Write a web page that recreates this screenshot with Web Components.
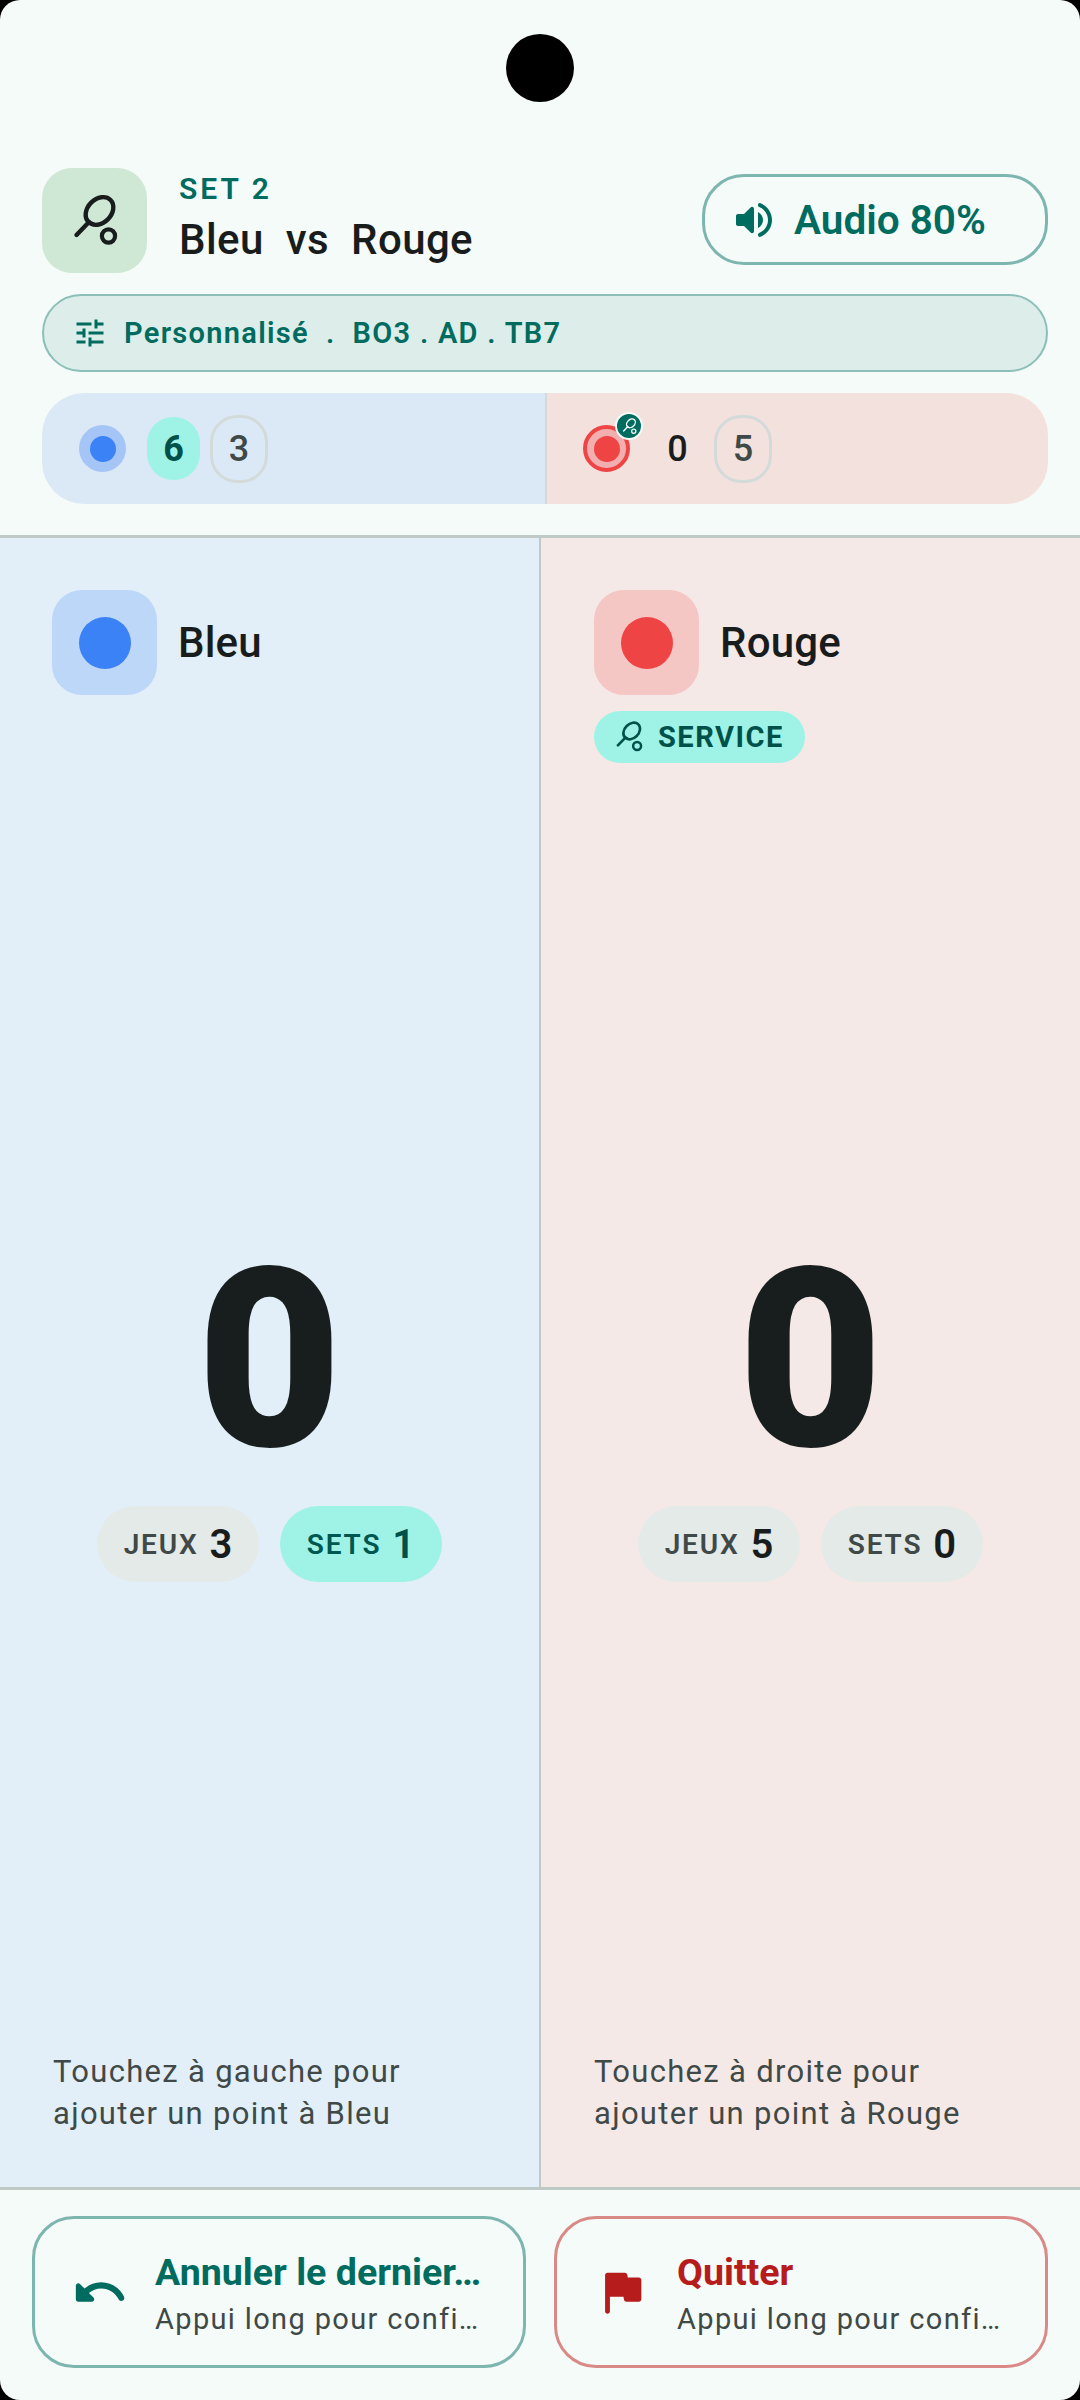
<!DOCTYPE html>
<html lang="fr">
<head>
<meta charset="utf-8">
<title>Score</title>
<style>
  html, body { margin: 0; padding: 0; background: #000; }
  body { width: 1080px; height: 2400px; overflow: hidden; font-family: Roboto, "Liberation Sans", sans-serif; }
</style>
</head>
<body>
<app-shell>
  <match-header></match-header>
  <player-panel slot="panels" color="blue" name="Bleu" games="3" sets="1" sets-on hint="Touchez à gauche pour&#10;ajouter un point à Bleu"></player-panel>
  <player-panel slot="panels" color="red" name="Rouge" games="5" sets="0" service hint="Touchez à droite pour&#10;ajouter un point à Rouge"></player-panel>
  <action-button slot="actions" kind="undo" title-text="Annuler le dernier…" sub="Appui long pour confi…"></action-button>
  <action-button slot="actions" kind="quit" title-text="Quitter" sub="Appui long pour confi…"></action-button>
</app-shell>

<script>
const RACKET = `
  <svg viewBox="0 0 60 60" fill="none" stroke="currentColor" stroke-linecap="round" aria-hidden="true">
    <ellipse cx="34.5" cy="20" rx="15.6" ry="11.8" transform="rotate(-45 34.5 20)" stroke-width="4.4"/>
    <path d="M24 31 L11.5 44" stroke-width="4.4"/>
    <path d="M21 26 Q23 31 29 33" stroke-width="3"/>
    <circle cx="43.5" cy="45" r="6.6" stroke-width="4.2"/>
  </svg>`;

const ICONS = {
  volume: 'M3 10v4c0 .55.45 1 1 1h3l3.29 3.29c.63.63 1.71.18 1.71-.71V6.41c0-.89-1.08-1.34-1.71-.71L7 9H4c-.55 0-1 .45-1 1zm13.5 2c0-1.77-1.02-3.29-2.5-4.03v8.05c1.48-.73 2.5-2.25 2.5-4.02zM14 4.45v.2c0 .38.25.71.6.85C17.18 6.53 19 9.06 19 12s-1.82 5.47-4.4 6.5c-.36.14-.6.47-.6.85v.2c0 .63.63 1.07 1.21.85C18.6 19.11 21 15.84 21 12s-2.4-7.11-5.79-8.4c-.58-.23-1.21.22-1.21.85z',
  tune: 'M3 17v2h6v-2H3zM3 5v2h10V5H3zm10 16v-2h8v-2h-8v-2h-2v6h2zM7 9v2H3v2h4v2h2V9H7zm14 4v-2H11v2h10zm-6-4h2V7h4V5h-4V3h-2v6z',
  undo: 'M12.5 8c-2.65 0-5.05.99-6.9 2.6L3.71 8.71C3.08 8.08 2 8.52 2 9.41V15c0 .55.45 1 1 1h5.59c.89 0 1.34-1.08.71-1.71l-1.91-1.91c1.39-1.16 3.16-1.88 5.12-1.88 3.16 0 5.89 1.84 7.19 4.5.27.56.91.84 1.5.64.71-.23 1.07-1.04.75-1.72C20.23 10.42 16.65 8 12.5 8z',
  quit: 'M14.4 6l-.24-1.2c-.09-.46-.5-.8-.98-.8H6c-.55 0-1 .45-1 1v15c0 .55.45 1 1 1s1-.45 1-1v-6h5.6l.24 1.2c.09.47.5.8.98.8H19c.55 0 1-.45 1-1V7c0-.55-.45-1-1-1h-4.6z'
};

const icon = (name, size) => `<svg width="${size}" height="${size}" viewBox="0 0 24 24" fill="currentColor" aria-hidden="true"><path d="${ICONS[name]}"/></svg>`;

class AppShell extends HTMLElement {
  constructor() {
    super();
    this.attachShadow({ mode: 'open' });
    this.shadowRoot.innerHTML = `
      <style>
        :host {
          display: flex;
          flex-direction: column;
          position: relative;
          width: 1080px;
          height: 2400px;
          background: #f5fbf8;
          border-radius: 20px;
          overflow: hidden;
        }
        .camera {
          position: absolute;
          left: 506px;
          top: 34px;
          width: 68px;
          height: 68px;
          border-radius: 50%;
          background: #000;
        }
        .panels {
          flex: 1;
          display: grid;
          grid-template-columns: 539px 541px;
          border-top: 3px solid #bfc9c5;
          border-bottom: 3px solid #bfc9c5;
          min-height: 0;
        }
        .actions {
          display: grid;
          grid-template-columns: 494px 494px;
          column-gap: 28px;
          padding: 26px 32px 32px 32px;
          height: 152px;
        }
      </style>
      <div class="camera"></div>
      <slot></slot>
      <div class="panels"><slot name="panels"></slot></div>
      <div class="actions"><slot name="actions"></slot></div>
    `;
  }
}

class MatchHeader extends HTMLElement {
  constructor() {
    super();
    this.attachShadow({ mode: 'open' });
    this.shadowRoot.innerHTML = `
      <style>
        :host {
          display: flex;
          flex-direction: column;
          height: 535px;
          box-sizing: border-box;
          padding: 168px 32px 0 42px;
          color: #191c1c;
        }
        .top { display: flex; align-items: center; height: 105px; }
        .logo {
          width: 105px;
          height: 105px;
          border-radius: 30px;
          background: #cfe8d5;
          display: grid;
          place-items: center;
          color: #191c1c;
          flex: none;
        }
        .logo svg { width: 60px; height: 60px; }
        .titles { flex: 1; margin-left: 32px; margin-top: -4px; }
        .set {
          color: #006b5f;
          font-size: 30px;
          line-height: 36px;
          font-weight: 600;
          letter-spacing: 3px;
        }
        .match {
          margin-top: 6px;
          font-size: 42px;
          line-height: 54px;
          font-weight: 500;
          white-space: pre;
          letter-spacing: .4px;
          word-spacing: .2px;
        }
        .audio {
          box-sizing: border-box;
          width: 346px;
          height: 91px;
          margin-top: -2px;
          padding-top: 1px;
          border: 3px solid #7db5af;
          border-radius: 42px;
          display: flex;
          align-items: center;
          padding-left: 25px;
          color: #006b5f;
          font-size: 40.5px;
          font-weight: 600;
          gap: 16px;
        }
        .audio svg { flex: none; }
        .format {
          box-sizing: border-box;
          height: 78px;
          margin-top: 21px;
          border: 2px solid #8cbfb8;
          border-radius: 39px;
          background: #ddede9;
          display: flex;
          align-items: center;
          padding-left: 28px;
          gap: 16px;
          color: #006b5f;
          font-size: 29px;
          font-weight: 600;
          letter-spacing: 1.3px;
          white-space: pre;
        }
        .strip {
          margin-top: 21px;
          height: 111px;
          border-radius: 42px;
          overflow: hidden;
          display: grid;
          grid-template-columns: 503px 2px 1fr;
        }
        .side { display: flex; align-items: center; padding-left: 37px; }
        .side.red { padding-left: 36px; background: #f3e1de; }
        .side.blue { background: #dbe9f6; }
        .rule { background: #d4d9da; }
        .dot {
          position: relative;
          flex: none;
          box-sizing: border-box;
          width: 47px;
          height: 47px;
          border-radius: 50%;
          display: grid;
          place-items: center;
          margin-right: 21px;
        }
        .dot i { width: 26px; height: 26px; border-radius: 50%; }
        .blue .dot { background: #a6c5f7; }
        .blue .dot i { background: #3b82f6; }
        .red .dot { background: #f3afaf; border: 4px solid #ef4444; }
        .red .dot i { background: #ef4444; }
        .badge {
          position: absolute;
          left: 28px;
          top: -17px;
          width: 28px;
          height: 28px;
          box-sizing: border-box;
          border: 2px solid #f5fbf8;
          border-radius: 50%;
          background: #006b5f;
          color: #f5fbf8;
          display: grid;
          place-items: center;
        }
        .badge svg { width: 19px; height: 19px; }
        .num {
          box-sizing: border-box;
          width: 53px;
          height: 63px;
          border-radius: 26px;
          display: grid;
          place-items: center;
          font-size: 36px;
          font-weight: 500;
          flex: none;
        }
        .num.on { background: #9ff3e6; color: #00514a; font-weight: 700; }
        .num.off {
          width: 58px;
          height: 68px;
          margin-left: 10px;
          border: 3px solid #d3dada;
          border-radius: 27px;
          color: #3f4947;
        }
      </style>
      <div class="top">
        <div class="logo">${RACKET}</div>
        <div class="titles">
          <div class="set">SET 2</div>
          <div class="match">Bleu  vs  Rouge</div>
        </div>
        <div class="audio">${icon('volume', 48)}<span>Audio 80%</span></div>
      </div>
      <div class="format">${icon('tune', 36)}<span>Personnalisé  .  BO3 . AD . TB7</span></div>
      <div class="strip">
        <div class="side blue">
          <div class="dot"><i></i></div>
          <div class="num on">6</div>
          <div class="num off">3</div>
        </div>
        <div class="rule"></div>
        <div class="side red">
          <div class="dot"><i></i><span class="badge">${RACKET}</span></div>
          <div class="num">0</div>
          <div class="num off">5</div>
        </div>
      </div>
    `;
  }
}

class StatPill extends HTMLElement {
  constructor() {
    super();
    this.attachShadow({ mode: 'open' });
    this.shadowRoot.innerHTML = `
      <style>
        :host {
          display: flex;
          align-items: center;
          justify-content: center;
          box-sizing: border-box;
          width: 162px;
          height: 76px;
          border-radius: 38px;
          gap: 11px;
          background: #e4eae8;
          color: #3f4947;
          font-size: 28px;
          font-weight: 600;
          letter-spacing: 1.8px;
        }
        :host([on]) { background: #9ff3e6; color: #00574f; }
        b { font-size: 40px; font-weight: 600; color: #191c1c; letter-spacing: 0; }
        :host([on]) b { color: #00514a; }
      </style>
      <span><slot></slot></span><b></b>
    `;
  }
  connectedCallback() {
    this.shadowRoot.querySelector('b').textContent = this.getAttribute('value');
  }
}

class PlayerPanel extends HTMLElement {
  constructor() {
    super();
    this.attachShadow({ mode: 'open' });
  }
  connectedCallback() {
    const red = this.getAttribute('color') === 'red';
    const service = this.hasAttribute('service');
    const pad = red ? 53 : 52;
    this.shadowRoot.innerHTML = `
      <style>
        :host {
          display: flex;
          flex-direction: column;
          box-sizing: border-box;
          min-height: 0;
          padding: 52px 40px 52px ${pad}px;
          background: ${red ? '#f5e9e7' : '#e2eff8'};
          color: #191c1c;
          ${red ? 'border-left: 2px solid #bfc9c5;' : ''}
        }
        .top { height: 174px; }
        .who { display: flex; align-items: center; gap: 21px; }
        .box {
          width: 105px;
          height: 105px;
          border-radius: 30px;
          background: ${red ? '#f4c6c4' : '#bdd7f9'};
          display: grid;
          place-items: center;
        }
        .box i { width: 52px; height: 52px; border-radius: 50%; background: ${red ? '#ef4444' : '#3b82f6'}; }
        .name { font-size: 42px; font-weight: 500; letter-spacing: .2px; }
        .service {
          display: inline-flex;
          align-items: center;
          height: 52px;
          margin-top: 16px;
          padding: 0 21px 0 17px;
          gap: 11px;
          border-radius: 26px;
          background: #9ff3e6;
          color: #00514a;
          font-size: 29px;
          font-weight: 700;
          letter-spacing: 1.5px;
        }
        .service svg { width: 36px; height: 36px; }
        .middle {
          flex: 1;
          display: flex;
          flex-direction: column;
          align-items: center;
          margin-left: -${pad}px;
          margin-right: -40px;
          min-height: 0;
          padding-top: 457px;
        }
        .big { font-size: 250px; line-height: 280px; font-weight: 900; color: #181e1e; }
        .stats { display: flex; gap: 21px; margin-top: 5px; }
        .hint {
          font-size: 31px;
          line-height: 42px;
          letter-spacing: 1.3px;
          color: #3f4947;
          white-space: pre-line;
          ${red ? '' : 'margin-left: 1px;'}
        }
      </style>
      <div class="top">
        <div class="who"><div class="box"><i></i></div><div class="name">${this.getAttribute('name')}</div></div>
        ${service ? `<div class="service">${RACKET}<span>SERVICE</span></div>` : ''}
      </div>
      <div class="middle">
        <div class="big">0</div>
        <div class="stats">
          <stat-pill value="${this.getAttribute('games')}">JEUX</stat-pill>
          <stat-pill value="${this.getAttribute('sets')}" ${this.hasAttribute('sets-on') ? 'on' : ''}>SETS</stat-pill>
        </div>
      </div>
      <div class="hint">${this.getAttribute('hint')}</div>
    `;
  }
}

class ActionButton extends HTMLElement {
  constructor() {
    super();
    this.attachShadow({ mode: 'open' });
  }
  connectedCallback() {
    const quit = this.getAttribute('kind') === 'quit';
    this.shadowRoot.innerHTML = `
      <style>
        :host {
          display: flex;
          align-items: center;
          box-sizing: border-box;
          height: 152px;
          min-width: 0;
          padding: 0 30px 0 36px;
          gap: 26px;
          border: 3px solid ${quit ? '#d98a87' : '#7db5af'};
          border-radius: 42px;
        }
        svg { flex: none; color: ${quit ? '#b71c1c' : '#006b5f'}; }
        .text { min-width: 0; flex: 1; padding-top: 4px; white-space: nowrap; }
        .title { font-size: 37.6px; line-height: 45px; font-weight: 700; color: ${quit ? '#b71c1c' : '#006b5f'}; }
        .sub { font-size: 29px; line-height: 40px; margin-top: 4px; letter-spacing: 1.35px; font-weight: 450; color: #3f4947; }
      </style>
      ${icon(quit ? 'quit' : 'undo', 58)}
      <div class="text">
        <div class="title">${this.getAttribute('title-text')}</div>
        <div class="sub">${this.getAttribute('sub')}</div>
      </div>
    `;
  }
}

customElements.define('app-shell', AppShell);
customElements.define('match-header', MatchHeader);
customElements.define('stat-pill', StatPill);
customElements.define('player-panel', PlayerPanel);
customElements.define('action-button', ActionButton);
</script>
</body>
</html>
